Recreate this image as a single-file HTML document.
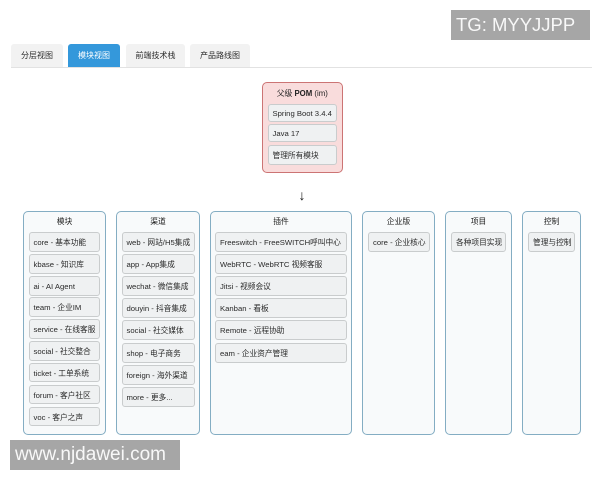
<!DOCTYPE html>
<html>
<head>
<meta charset="utf-8">
<style>
html,body{margin:0;padding:0;width:600px;height:480px;overflow:hidden;background:#fff;}
body{position:relative;font-family:"Liberation Sans","Noto Sans CJK SC",sans-serif;color:#333;}
#d{position:absolute;left:0;top:0;width:600px;height:480px;filter:blur(0.35px);}
.t,.c,.i,.p,.h,.a{position:absolute;box-sizing:border-box;}
.t{top:44px;height:23px;background:#f2f2f2;border-radius:3px 3px 0 0;font-size:8px;line-height:24px;text-align:center;color:#2c2c2c;}
.t.on{background:#3498db;color:#fff;}
.line{position:absolute;left:11px;top:67px;width:581px;height:1px;background:#e2e2e2;}
.c{top:211px;height:223.5px;background:#f8fafb;border:1px solid #84adc3;border-radius:5px;}
.p{left:261.5px;top:82px;width:81.5px;height:91px;background:#f9dcdc;border:1px solid #cc7474;border-radius:5px;}
.h{font-size:7.8px;font-weight:normal;text-align:center;line-height:12px;color:#222;}
.i{height:19.5px;background:#eff1f2;border:1px solid #c9cccd;border-radius:3px;font-size:7.7px;line-height:19px;padding-left:4px;white-space:nowrap;color:#2a2a2a;}
.a{left:296px;top:186px;width:12px;text-align:center;font-size:14px;line-height:18px;color:#111;}
.w{position:absolute;background:#a6a6a6;color:rgba(255,255,255,.92);line-height:30px;height:30px;white-space:nowrap;}
</style>
</head>
<body>
<div id="d">
<div class="t" style="left:11px;width:52px">分层视图</div>
<div class="t on" style="left:68px;width:52px">模块视图</div>
<div class="t" style="left:126px;width:59px">前端技术栈</div>
<div class="t" style="left:190px;width:60px">产品路线图</div>
<div class="line"></div>

<div class="p"></div>
<div class="h" style="left:261.5px;top:88px;width:81.5px">父级 <b style="font-weight:bold">POM</b> (im)</div>
<div class="i" style="left:267.5px;top:104px;width:69.5px;height:18px;line-height:18px">Spring Boot 3.4.4</div>
<div class="i" style="left:267.5px;top:124px;width:69.5px;height:18px;line-height:17px">Java 17</div>
<div class="i" style="left:267.5px;top:144.5px;width:69.5px;height:20px;line-height:19px">管理所有模块</div>
<div class="a">↓</div>

<div class="c" style="left:23px;width:83px"></div>
<div class="c" style="left:116px;width:84px"></div>
<div class="c" style="left:210px;width:142px"></div>
<div class="c" style="left:362px;width:73px"></div>
<div class="c" style="left:445px;width:67px"></div>
<div class="c" style="left:522px;width:59px"></div>

<div class="h" style="left:23px;width:83px;top:216px">模块</div>
<div class="h" style="left:116px;width:84px;top:216px">渠道</div>
<div class="h" style="left:210px;width:142px;top:216px">插件</div>
<div class="h" style="left:362px;width:73px;top:216px">企业版</div>
<div class="h" style="left:445px;width:67px;top:216px">项目</div>
<div class="h" style="left:522px;width:59px;top:216px">控制</div>

<div class="i" style="left:28.5px;width:71.5px;top:232px">core - 基本功能</div>
<div class="i" style="left:28.5px;width:71.5px;top:254px">kbase - 知识库</div>
<div class="i" style="left:28.5px;width:71.5px;top:276px">ai - AI Agent</div>
<div class="i" style="left:28.5px;width:71.5px;top:297px">team - 企业IM</div>
<div class="i" style="left:28.5px;width:71.5px;top:319px">service - 在线客服</div>
<div class="i" style="left:28.5px;width:71.5px;top:341px">social - 社交整合</div>
<div class="i" style="left:28.5px;width:71.5px;top:362.5px">ticket - 工单系统</div>
<div class="i" style="left:28.5px;width:71.5px;top:384.5px">forum - 客户社区</div>
<div class="i" style="left:28.5px;width:71.5px;top:406.5px">voc - 客户之声</div>

<div class="i" style="left:121.5px;width:73px;top:232px">web - 网站/H5集成</div>
<div class="i" style="left:121.5px;width:73px;top:254px">app - App集成</div>
<div class="i" style="left:121.5px;width:73px;top:276px">wechat - 微信集成</div>
<div class="i" style="left:121.5px;width:73px;top:298px">douyin - 抖音集成</div>
<div class="i" style="left:121.5px;width:73px;top:320px">social - 社交媒体</div>
<div class="i" style="left:121.5px;width:73px;top:343px">shop - 电子商务</div>
<div class="i" style="left:121.5px;width:73px;top:365px">foreign - 海外渠道</div>
<div class="i" style="left:121.5px;width:73px;top:387px">more - 更多...</div>

<div class="i" style="left:215px;width:132px;top:232px">Freeswitch - FreeSWITCH呼叫中心</div>
<div class="i" style="left:215px;width:132px;top:254px">WebRTC - WebRTC 视频客服</div>
<div class="i" style="left:215px;width:132px;top:276px">Jitsi - 视频会议</div>
<div class="i" style="left:215px;width:132px;top:298px">Kanban - 看板</div>
<div class="i" style="left:215px;width:132px;top:320px">Remote - 远程协助</div>
<div class="i" style="left:215px;width:132px;top:343px">eam - 企业资产管理</div>

<div class="i" style="left:368px;width:62px;top:232px">core - 企业核心</div>
<div class="i" style="left:451px;width:55px;top:232px">各种项目实现</div>
<div class="i" style="left:528px;width:47px;top:232px">管理与控制</div>
</div>

<div class="w" style="left:451px;top:10px;width:139px;padding-left:5px;box-sizing:border-box;font-size:18.5px">TG: MYYJJPP</div>
<div class="w" style="left:10px;top:440px;width:170px;padding-left:5px;box-sizing:border-box;font-size:19px">www.njdawei.com</div>
</body>
</html>
